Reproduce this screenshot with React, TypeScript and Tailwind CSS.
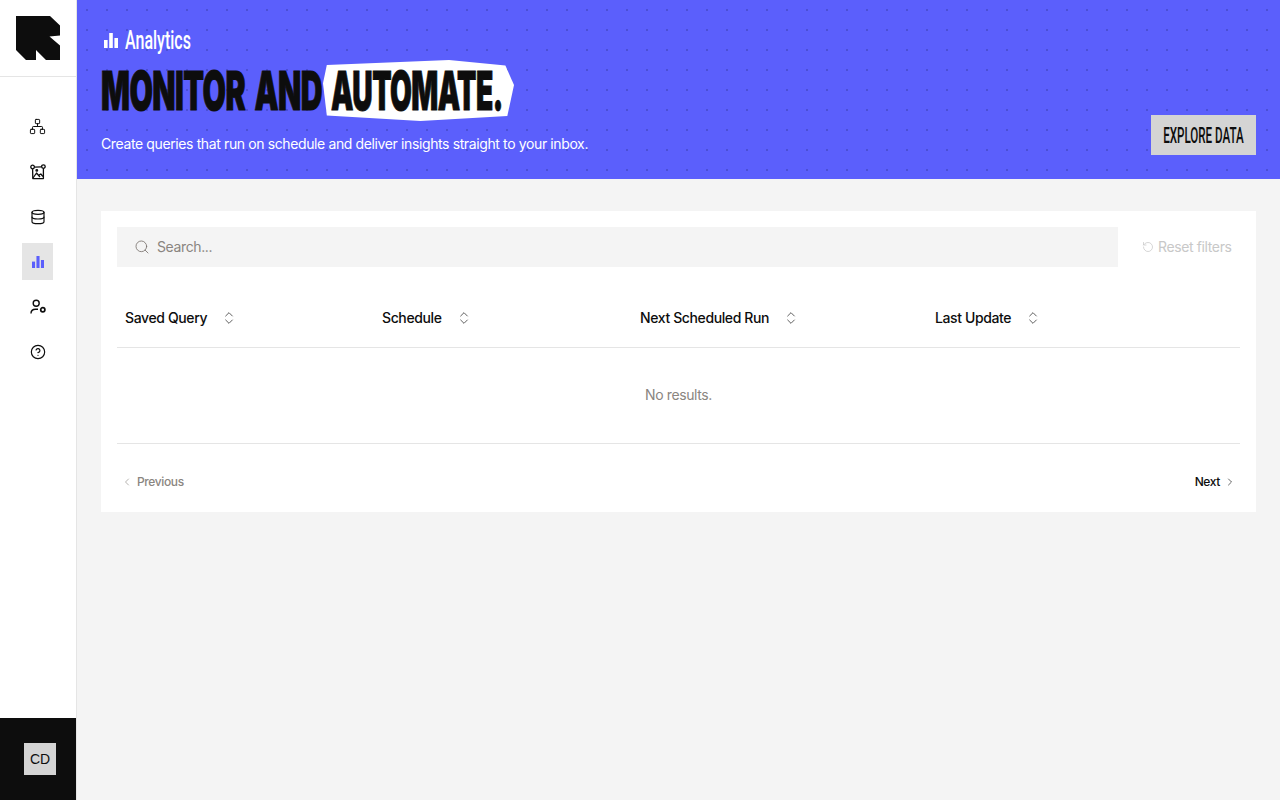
import { ChevronLeft, ChevronRight, ChevronsUpDown, CircleHelp, Database, Network, RotateCcw, Search } from 'lucide-react'

function BarsIcon({ className }: { className: string }): JSX.Element {
  return (
    <svg viewBox="0 0 14 15" preserveAspectRatio="none" className={className} fill="currentColor">
      <rect x="0" y="7" width="3.6" height="8" />
      <rect x="5.2" y="0" width="3.6" height="15" />
      <rect x="10.4" y="5" width="3.6" height="10" />
    </svg>
  )
}

function ModelIcon(): JSX.Element {
  return (
    <svg viewBox="0 0 16 16" className="h-4 w-4" fill="none" stroke="currentColor" strokeWidth="1.3" strokeLinejoin="round">
      <circle cx="2.6" cy="3" r="1.8" />
      <circle cx="13.4" cy="2.6" r="1.8" />
      <path d="M4.4 3.2 L11.6 2.8 M13.4 4.4 L13.4 14.6 L2.8 14.6 L2.6 4.8" />
      <path d="M3 14 L6.5 9 L10 13 M9 11 L10.8 10 L13 12.5" />
      <circle cx="6.8" cy="6.4" r="0.8" />
    </svg>
  )
}

function UserGearIcon(): JSX.Element {
  return (
    <svg viewBox="0 0 16 16" className="h-4 w-4" fill="none" stroke="currentColor" strokeWidth="1.4">
      <circle cx="6.2" cy="4.2" r="3" />
      <path d="M1 14.5 C1 11.5 3 10.2 5.5 10.2 L8 10.2" />
      <circle cx="12.8" cy="10.8" r="2.1" strokeWidth="1.7" />
    </svg>
  )
}

function Sidebar(): JSX.Element {
  const itemClass = 'flex h-[37px] w-[31px] items-center justify-center text-[#0d0d0d]'
  return (
    <aside className="flex w-[77px] shrink-0 flex-col border-r border-[#e5e5e5] bg-white">
      <div className="flex h-[77px] items-start border-b border-[#e5e5e5] pl-4 pt-4">
        <svg viewBox="0 0 44 44" className="h-11 w-11" fill="#0d0d0d">
          <polygon points="0,0 34,0 44,9.5 44,19.5 33.5,20.5 44,29.5 44,44 30,44 20,34 20,44 10,44 0,34" />
        </svg>
      </div>
      <nav className="flex flex-col items-center gap-2 pr-[1px] pt-[31px]">
        <div className={itemClass}><Network size={17} strokeWidth={1.4} /></div>
        <div className={itemClass}><ModelIcon /></div>
        <div className={itemClass}><Database size={16} strokeWidth={1.75} /></div>
        <div className={`${itemClass} bg-[#e5e5e5] text-[#5b5ffc]`}><BarsIcon className="h-3 w-3" /></div>
        <div className={itemClass}><UserGearIcon /></div>
        <div className={itemClass}><CircleHelp size={16} strokeWidth={1.75} /></div>
      </nav>
      <div className="mt-auto flex h-[82px] w-[76px] items-center bg-[#0d0d0d] pl-6">
        <div className="flex h-8 w-8 items-center justify-center bg-[#d4d4d4] font-['Liberation_Sans',sans-serif] text-sm font-medium tracking-normal text-[#0d0d0d]">CD</div>
      </div>
    </aside>
  )
}

function Banner(): JSX.Element {
  return (
    <header className="flex h-[179px] bg-[#5b5ffc] bg-[radial-gradient(circle,#4b4fd6_0.8px,transparent_1px)] bg-[length:20px_20px] px-6 pt-[27px]">
      <div className="flex-1">
        <div className="flex h-[27px] items-center gap-[7px] pl-[3px] text-white">
          <BarsIcon className="h-[15px] w-[14px]" />
          <span className="inline-block w-[66px] origin-left scale-x-[0.64] whitespace-nowrap font-['Roboto',sans-serif] text-[25px] font-medium leading-none tracking-normal">Analytics</span>
        </div>
        <h1 className="mt-[6px] flex h-[61px] items-center text-[#0d0d0d]">
          <span className="inline-block w-[222px] origin-left scale-x-[0.561] whitespace-nowrap text-[54px] font-black leading-none tracking-[-1px] [word-spacing:7px] [-webkit-text-stroke:1px_#0d0d0d]">MONITOR AND</span>
          <span className="flex h-[61px] w-[191px] items-center bg-white pl-[8px] [clip-path:polygon(2%_8%,66%_0%,95.5%_9%,100%_41%,96.5%_92%,51%_100%,2%_91%,0%_38%)]">
            <span className="inline-block origin-left scale-x-[0.522] whitespace-nowrap text-[54px] font-black leading-none tracking-[-1px] [-webkit-text-stroke:1px_#0d0d0d]">AUTOMATE.</span>
          </span>
        </h1>
        <p className="mt-[13px] text-sm leading-5 text-white">Create queries that run on schedule and deliver insights straight to your inbox.</p>
      </div>
      <div className="flex items-end pb-6">
        <button className="flex h-10 w-[105px] items-center justify-center bg-[#d4d4d4] pt-[1px] text-[#0d0d0d]">
          <span className="inline-block origin-center scale-x-[0.527] whitespace-nowrap font-['Roboto',sans-serif] text-[22px] font-medium leading-none tracking-normal">EXPLORE DATA</span>
        </button>
      </div>
    </header>
  )
}

function Th({ label }: { label: string }): JSX.Element {
  return (
    <div className="flex items-center gap-[14px] pl-2 pt-[2px] text-sm font-medium text-[#0d0d0d]">
      <span>{label}</span>
      <ChevronsUpDown size={16} strokeWidth={1} />
    </div>
  )
}

export default function App(): JSX.Element {
  return (
    <div className="flex h-[800px] w-[1280px] overflow-hidden bg-[#f4f4f4] font-['Inter',sans-serif] tracking-[-0.38px]">
      <Sidebar />
      <main className="flex-1">
        <Banner />
        <div className="px-6 pt-8">
          <section className="bg-white p-4">
            <div className="flex h-10 items-center">
              <div className="flex h-10 w-[1001px] items-center gap-[7px] bg-[#f4f4f4] pl-[17px] text-sm text-[#8a8580]">
                <Search size={16} strokeWidth={1.25} className="text-[#78716c]" />
                <span>Search...</span>
              </div>
              <div className="ml-6 flex items-center gap-1 text-sm text-[#c8c8c8]">
                <RotateCcw size={12} strokeWidth={1.5} />
                <span>Reset filters</span>
              </div>
            </div>
            <div className="mt-5 grid h-[61px] grid-cols-[257px_258px_295px_1fr] border-b border-[#e5e5e5]">
              <Th label="Saved Query" />
              <Th label="Schedule" />
              <Th label="Next Scheduled Run" />
              <Th label="Last Update" />
            </div>
            <div className="flex h-[96px] items-center justify-center border-b border-[#e5e5e5] pb-[2px] text-sm text-[#8a8580]">No results.</div>
            <div className="flex h-[52px] items-end justify-between pb-[6px] pl-1 pr-1 text-xs font-medium">
              <div className="flex items-center gap-1 text-[#8a8580]">
                <ChevronLeft size={12} strokeWidth={1.25} />
                <span>Previous</span>
              </div>
              <div className="flex items-center gap-1 text-[#0d0d0d]">
                <span>Next</span>
                <ChevronRight size={12} strokeWidth={1.25} />
              </div>
            </div>
          </section>
        </div>
      </main>
    </div>
  )
}
